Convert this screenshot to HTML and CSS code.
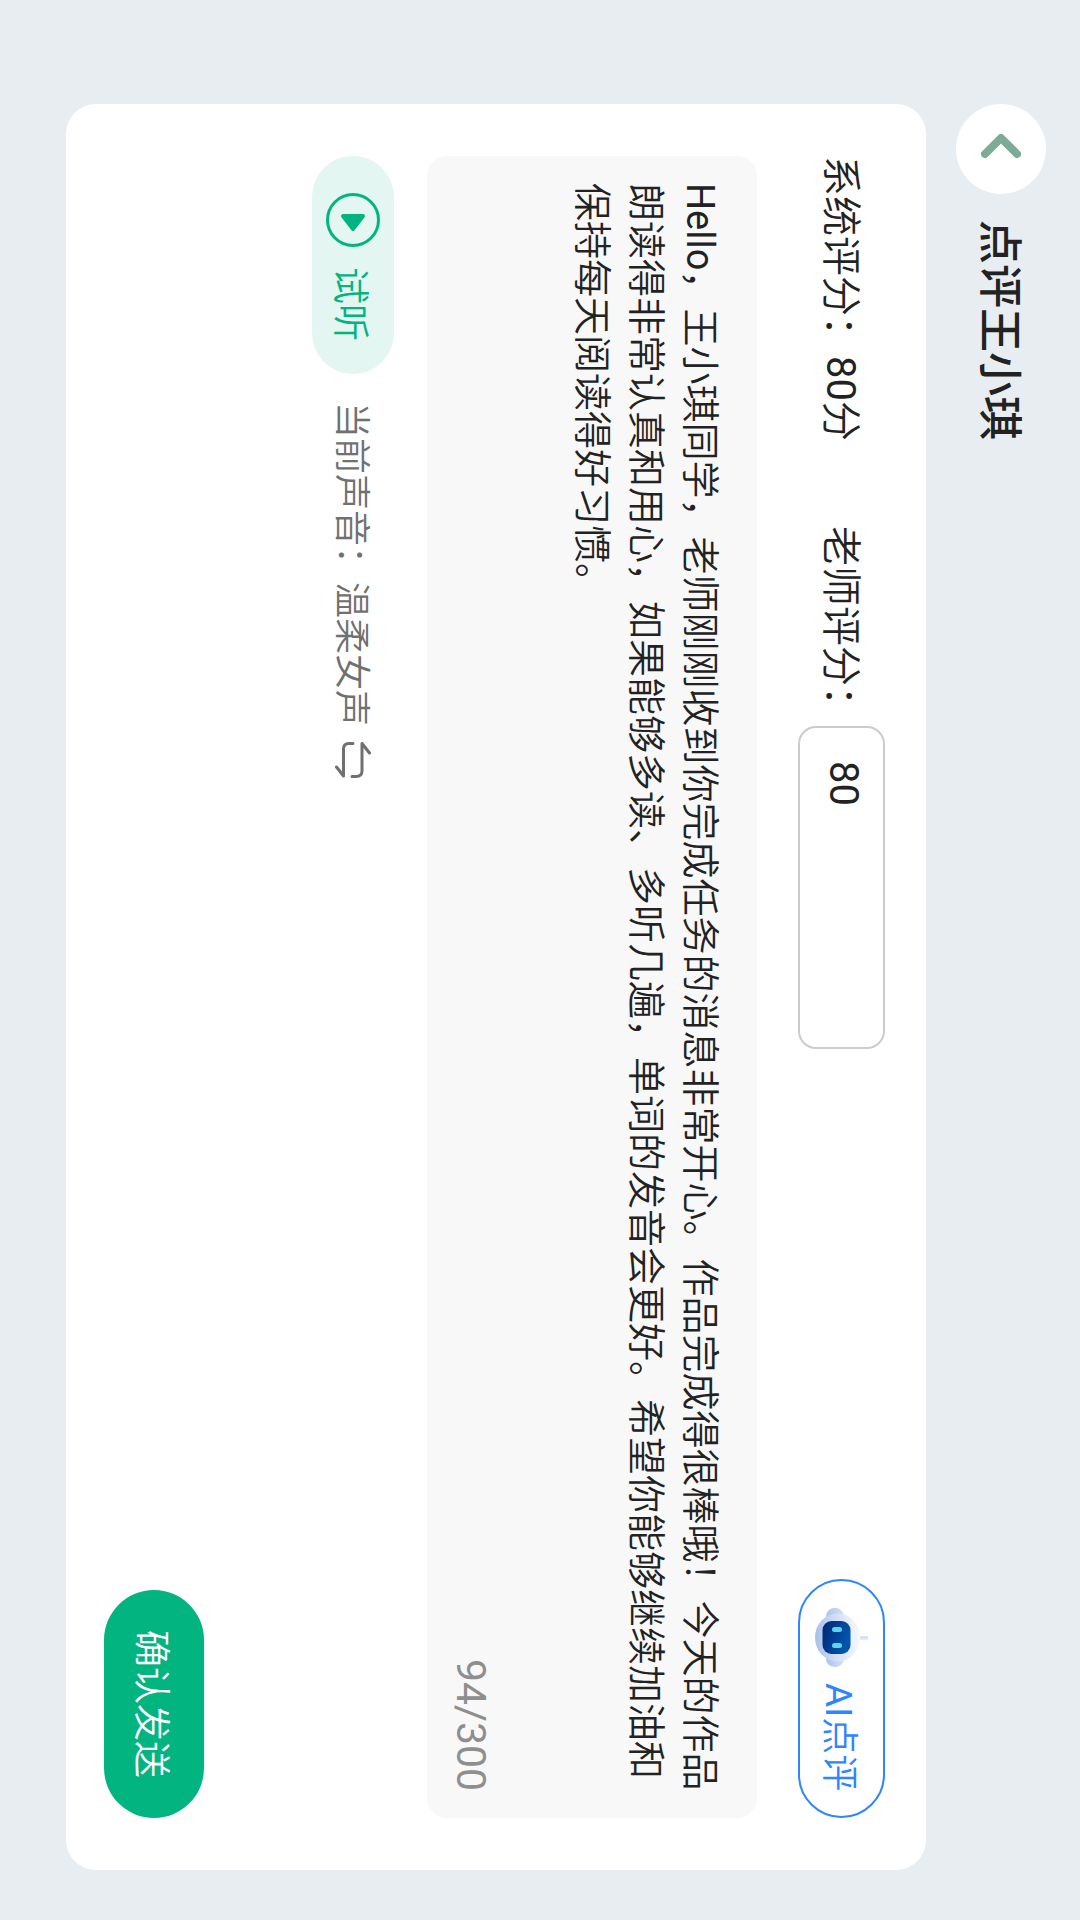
FILE: index.html
```html
<!DOCTYPE html>
<html lang="zh-CN">
<head>
<meta charset="utf-8">
<title>点评王小琪</title>
<link rel="stylesheet" href="styles.css">
</head>
<body>
<main class="stage">
  <header class="header">
    <div class="back">
      <svg class="back-icon" viewBox="0 0 40 30"><path d="M4 20 L20 4 L36 20" /></svg>
    </div>
    <h1 class="title">点评王小琪</h1>
  </header>
  <section class="card">
    <div class="score-row">
      <span class="score-text">系统评分：<span class="latin">80</span>分</span>
      <span class="score-text teacher">老师评分：</span>
      <div class="score-input latin">80</div>
      <div class="ai-btn">
        <svg class="robot" viewBox="0 0 53 59">
          <defs>
            <linearGradient id="head" x1="0" y1="0" x2="1" y2="0">
              <stop offset="0" stop-color="#a5c0e8"/>
              <stop offset="0.45" stop-color="#d3def3"/>
              <stop offset="1" stop-color="#f6f8fd"/>
            </linearGradient>
            <linearGradient id="ear" x1="0" y1="0" x2="1" y2="0">
              <stop offset="0" stop-color="#a9c3ea"/>
              <stop offset="1" stop-color="#d6e2f5"/>
            </linearGradient>
            <linearGradient id="face" x1="0" y1="0" x2="1" y2="0.4">
              <stop offset="0" stop-color="#002478"/>
              <stop offset="1" stop-color="#0058ac"/>
            </linearGradient>
          </defs>
          <rect x="45" y="28" width="8" height="3.6" fill="#d4e4f6"/>
          <rect x="11" y="0" width="18" height="59" rx="8.5" fill="url(#ear)"/>
          <ellipse cx="22.5" cy="29.5" rx="22.5" ry="24" fill="url(#head)"/>
          <rect x="7.5" y="13" width="28" height="33" rx="9" fill="url(#face)"/>
          <rect x="17" y="19" width="10" height="5" rx="2.5" fill="#58d8e4"/>
          <rect x="17" y="35" width="10" height="5" rx="2.5" fill="#58d8e4"/>
        </svg>
        <span><span class="latin">AI</span>点评</span>
      </div>
    </div>
    <div class="comment">
      <p class="comment-text"><span class="latin">Hello</span>，王小琪同学，老师刚刚收到你完成任务的消息非常开心。作品完成得很棒哦！今天的作品朗读得非常认真和用心，如果能够多读、多听几遍，单词的发音会更好。希望你能够继续加油和保持每天阅读得好习惯。</p>
      <div class="count latin">94/300</div>
    </div>
    <div class="voice-row">
      <div class="listen">
        <svg class="listen-icon" viewBox="0 0 54 54">
          <circle cx="27" cy="27" r="25.5" />
          <path d="M17 23 H37 L27 36 Z" />
        </svg>
        <span>试听</span>
      </div>
      <span class="voice-name">当前声音：温柔女声</span>
      <svg class="swap" viewBox="0 0 36 36">
        <path d="M18 1.5 H14 Q8.5 1.5 8.5 7 V34 L1.5 25" />
        <path d="M34.5 11 L27 1.5 V29 Q27 34.5 21 34.5 H17" />
      </svg>
    </div>
    <div class="footer">
      <div class="confirm">确认发送</div>
    </div>
  </section>
</main>
</body>
</html>
```

FILE: styles.css
```css
* { box-sizing: border-box; margin: 0; padding: 0; }
html {
  writing-mode: vertical-rl;
  text-orientation: sideways;
  background: #e8edf1;
}
body {
  width: 1080px;
  height: 1920px;
  overflow: hidden;
  font-family: Roboto, "Noto Sans CJK SC", sans-serif;
  font-weight: 350;
  color: #222;
}
.latin { font-weight: 400; }

/* The whole screen is turned a quarter clockwise: inline runs down, blocks run right to left. */
.stage {
  inline-size: 1920px;
  block-size: 1080px;
  padding-block: 34px 66px;
  padding-inline: 104px 50px;
  display: flex;
  flex-direction: column;
}

.header { display: flex; align-items: center; gap: 26px; block-size: 90px; margin-block-end: 30px; }
.back {
  inline-size: 90px; block-size: 90px; border-radius: 50%; background: #fff;
  display: flex; align-items: center; justify-content: center;
}
.back-icon { width: 40px; height: 30px; }
.back-icon path { fill: none; stroke: #7eab97; stroke-width: 8; stroke-linecap: round; stroke-linejoin: round; }
.title { font-size: 44px; line-height: 60px; font-weight: 500; color: #222; margin-block-start: 4px; }

.card {
  flex: 1;
  background: #fff;
  border-radius: 30px;
  padding-block: 41px 38px;
  padding-inline: 52px;
  display: flex;
  flex-direction: column;
}

.score-row { display: flex; align-items: center; block-size: 87px; }
.score-text { font-size: 40px; line-height: 56px; color: #222; margin-block-start: 4px; }
.teacher { margin-inline-start: 85px; }
.score-input {
  inline-size: 323px; block-size: 87px;
  border: 2px solid #ccc;
  border-radius: 18px;
  padding-inline-start: 33px;
  font-size: 40px;
  line-height: 79px;
  color: #222;
}
.ai-btn {
  margin-inline-start: auto;
  inline-size: 239px; block-size: 87px;
  border: 2px solid #2e86ff;
  border-radius: 44px;
  display: flex; align-items: center;
  padding-inline-start: 27px;
  gap: 16px;
  font-size: 37px;
  color: #2e86ff;
}
.robot { width: 53px; height: 59px; flex: none; }

.comment {
  margin-block-start: 41px;
  block-size: 330px;
  background: #f8f8f8;
  border-radius: 20px;
  padding-block: 30px 16px;
  padding-inline: 27px 20px;
  display: flex;
  flex-direction: column;
  justify-content: space-between;
}
.comment-text { font-size: 38px; line-height: 54px; color: #222; }
.count { align-self: flex-end; margin-inline-end: 7px; font-size: 41px; line-height: 56px; color: #8e8e8e; }

.voice-row { margin-block-start: 33px; display: flex; align-items: center; block-size: 82px; }
.listen {
  inline-size: 218px; block-size: 82px;
  border-radius: 41px;
  background: #e3f6f1;
  color: #02b47f;
  display: flex; align-items: center;
  padding-inline-start: 37px;
  gap: 20px;
  font-size: 37px;
}
.listen-icon { width: 54px; height: 54px; flex: none; }
.listen-icon circle { fill: none; stroke: #02b47f; stroke-width: 3; }
.listen-icon path { fill: #02b47f; stroke: #02b47f; stroke-width: 4; stroke-linejoin: round; }
.voice-name { margin-inline-start: 28px; margin-block-start: 4px; font-size: 36px; line-height: 50px; color: #707070; }
.swap { width: 36px; height: 36px; margin-inline-start: 16px; flex: none; }
.swap path { fill: none; stroke: #707070; stroke-width: 3; stroke-linecap: round; stroke-linejoin: round; }

.footer { margin-block-start: auto; display: flex; justify-content: flex-end; }
.confirm {
  inline-size: 228px; block-size: 100px;
  border-radius: 50px;
  background: #02b47f;
  color: #fff;
  font-size: 37px;
  display: flex; align-items: center; justify-content: center;
}
```
